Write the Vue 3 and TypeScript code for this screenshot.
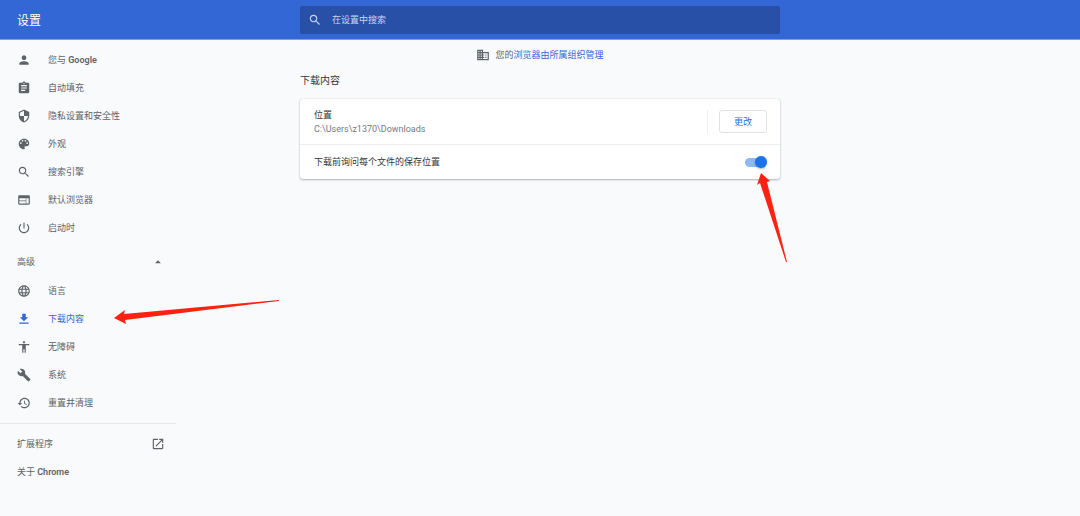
<script setup lang="ts">
import { ref } from 'vue'

interface NavItem {
  id: string
  label: string
  latin?: string
  icon: string
}

const basicItems: NavItem[] = [
  { id: 'people', label: '您与 ', latin: 'Google', icon: 'M12 12c2.21 0 4-1.79 4-4s-1.79-4-4-4-4 1.79-4 4 1.79 4 4 4zm0 2c-2.67 0-8 1.34-8 4v2h16v-2c0-2.66-5.33-4-8-4z' },
  { id: 'autofill', label: '自动填充', icon: 'M19 3h-4.18C14.4 1.84 13.3 1 12 1c-1.3 0-2.4.84-2.82 2H5c-1.1 0-2 .9-2 2v14c0 1.1.9 2 2 2h14c1.1 0 2-.9 2-2V5c0-1.1-.9-2-2-2zm-7 0c.55 0 1 .45 1 1s-.45 1-1 1-1-.45-1-1 .45-1 1-1zm2 14H7v-2h7v2zm3-4H7v-2h10v2zm0-4H7V7h10v2z' },
  { id: 'privacy', label: '隐私设置和安全性', icon: 'M12 1L3 5v6c0 5.55 3.84 10.74 9 12 5.16-1.26 9-6.45 9-12V5l-9-4zm0 10.99h7c-.53 4.12-3.28 7.79-7 8.94V12H5V6.3l7-3.11v8.8z' },
  { id: 'appearance', label: '外观', icon: 'M12 3c-4.97 0-9 4.03-9 9s4.03 9 9 9c.83 0 1.5-.67 1.5-1.5 0-.39-.15-.74-.39-1.01-.23-.26-.38-.61-.38-.99 0-.83.67-1.5 1.5-1.5H16c2.76 0 5-2.24 5-5 0-4.42-4.03-8-9-8zm-5.5 9c-.83 0-1.5-.67-1.5-1.5S5.67 9 6.5 9 8 9.67 8 10.5 7.33 12 6.5 12zm3-4C8.67 8 8 7.33 8 6.5S8.67 5 9.5 5s1.5.67 1.5 1.5S10.33 8 9.5 8zm5 0c-.83 0-1.5-.67-1.5-1.5S13.67 5 14.5 5s1.5.67 1.5 1.5S15.33 8 14.5 8zm3 4c-.83 0-1.5-.67-1.5-1.5S16.67 9 17.5 9s1.5.67 1.5 1.5-.67 1.5-1.5 1.5z' },
  { id: 'search', label: '搜索引擎', icon: 'M15.5 14h-.79l-.28-.27C15.41 12.59 16 11.11 16 9.5 16 5.91 13.09 3 9.5 3S3 5.91 3 9.5 5.91 16 9.5 16c1.61 0 3.09-.59 4.23-1.57l.27.28v.79l5 4.99L20.49 19l-4.99-5zm-6 0C7.01 14 5 11.99 5 9.5S7.01 5 9.5 5 14 7.01 14 9.5 11.99 14 9.5 14z' },
  { id: 'browser', label: '默认浏览器', icon: 'M20 4H4c-1.1 0-1.99.9-1.99 2L2 18c0 1.1.9 2 2 2h16c1.1 0 2-.9 2-2V6c0-1.1-.9-2-2-2zm-5 14H4v-4h11v4zm0-5H4V9h11v4zm5 5h-4V9h4v9z' },
  { id: 'startup', label: '启动时', icon: 'M13 3h-2v10h2V3zm4.83 2.17l-1.42 1.42C17.99 7.86 19 9.81 19 12c0 3.87-3.13 7-7 7s-7-3.13-7-7c0-2.19 1.01-4.14 2.58-5.42L6.17 5.17C4.23 6.82 3 9.26 3 12c0 4.97 4.03 9 9 9s9-4.03 9-9c0-2.74-1.23-5.18-3.17-6.83z' },
]

const advancedItems: NavItem[] = [
  { id: 'languages', label: '语言', icon: 'M11.99 2C6.47 2 2 6.48 2 12s4.47 10 9.99 10C17.52 22 22 17.52 22 12S17.52 2 11.99 2zm6.93 6h-2.95c-.32-1.25-.78-2.45-1.38-3.56 1.84.63 3.37 1.91 4.33 3.56zM12 4.04c.83 1.2 1.48 2.53 1.91 3.96h-3.82c.43-1.43 1.08-2.76 1.91-3.96zM4.26 14C4.1 13.36 4 12.69 4 12s.1-1.36.26-2h3.38c-.08.66-.14 1.32-.14 2s.06 1.34.14 2H4.26zm.82 2h2.95c.32 1.25.78 2.45 1.38 3.56-1.84-.63-3.37-1.9-4.33-3.56zm2.95-8H5.08c.96-1.66 2.49-2.93 4.33-3.56C8.81 5.55 8.35 6.75 8.03 8zM12 19.96c-.83-1.2-1.48-2.53-1.91-3.96h3.82c-.43 1.43-1.08 2.76-1.91 3.96zM14.34 14H9.66c-.09-.66-.16-1.32-.16-2s.07-1.35.16-2h4.68c.09.65.16 1.32.16 2s-.07 1.34-.16 2zm.25 5.56c.6-1.11 1.06-2.31 1.38-3.56h2.95c-.96 1.65-2.49 2.93-4.33 3.56zM16.36 14c.08-.66.14-1.32.14-2s-.06-1.34-.14-2h3.38c.16.64.26 1.31.26 2s-.1 1.36-.26 2h-3.38z' },
  { id: 'downloads', label: '下载内容', icon: 'M19 9h-4V3H9v6H5l7 7 7-7zM4 18v2h16v-2H4z' },
  { id: 'accessibility', label: '无障碍', icon: 'M12 2c1.1 0 2 .9 2 2s-.9 2-2 2-2-.9-2-2 .9-2 2-2zm9 7h-6v13h-2v-6h-2v6H9V9H3V7h18v2z' },
  { id: 'system', label: '系统', icon: 'M22.7 19l-9.1-9.1c.9-2.3.4-5-1.5-6.9-2-2-5-2.4-7.4-1.3L9 6 6 9 1.6 4.7C.4 7.1.9 10.1 2.9 12.1c1.9 1.9 4.6 2.4 6.9 1.5l9.1 9.1c.4.4 1 .4 1.4 0l2.3-2.3c.5-.4.5-1.1.1-1.4z' },
  { id: 'reset', label: '重置并清理', icon: 'M13 3c-4.97 0-9 4.03-9 9H1l3.89 3.89.07.14L9 12H6c0-3.87 3.13-7 7-7s7 3.13 7 7-3.13 7-7 7c-1.93 0-3.68-.79-4.94-2.06l-1.42 1.42C8.27 19.99 10.51 21 13 21c4.97 0 9-4.03 9-9s-4.03-9-9-9zm-1 5v5l4.28 2.54.72-1.21-3.5-2.08V8H12z' },
]

const searchIcon = basicItems[4].icon
const active = ref('downloads')
const advancedOpen = ref(true)
const askBeforeSaving = ref(true)
const query = ref('')
const location = 'C:\\Users\\z1370\\Downloads'
</script>

<template>
  <div class="page">
    <header class="toolbar">
      <h1 class="title">设置</h1>
      <label class="search">
        <svg class="icon" viewBox="0 0 24 24" aria-hidden="true"><path :d="searchIcon" /></svg>
        <input v-model="query" type="search" placeholder="在设置中搜索" aria-label="在设置中搜索" />
      </label>
    </header>

    <div class="body">
      <nav class="sidebar">
        <ul class="list">
          <li v-for="item in basicItems" :key="item.id">
            <a :href="'#' + item.id" class="item" :class="{ active: active === item.id }" @click="active = item.id">
              <svg class="icon" viewBox="0 0 24 24" aria-hidden="true"><path :d="item.icon" /></svg>
              <span>{{ item.label }}<b v-if="item.latin">{{ item.latin }}</b></span>
            </a>
          </li>
        </ul>
        <button type="button" class="item advanced" :aria-expanded="advancedOpen" @click="advancedOpen = !advancedOpen">
          <span>高级</span>
          <svg class="icon" viewBox="0 0 24 24" aria-hidden="true"><path d="M7 14l5-5 5 5z" /></svg>
        </button>
        <ul v-if="advancedOpen" class="list">
          <li v-for="item in advancedItems" :key="item.id" class="entry">
            <a :href="'#' + item.id" class="item" :class="{ active: active === item.id }" @click="active = item.id">
              <svg class="icon" viewBox="0 0 24 24" aria-hidden="true"><path :d="item.icon" /></svg>
              <span>{{ item.label }}</span>
            </a>
            <svg v-if="item.id === 'downloads'" class="arrow arrow-nav" viewBox="0 0 166 25" aria-hidden="true">
              <path d="M0 18 L11 10 L10 14 L165 0 L165 1 L11 20 L12 24 Z" />
            </svg>
          </li>
        </ul>
        <div class="footer">
          <a href="#extensions" class="item spread">
            <span>扩展程序</span>
            <svg class="icon" viewBox="0 0 24 24" aria-hidden="true"><path d="M19 19H5V5h7V3H5c-1.11 0-2 .9-2 2v14c0 1.1.89 2 2 2h14c1.1 0 2-.9 2-2v-7h-2v7zM14 3v2h3.59l-9.83 9.83 1.41 1.41L19 6.41V10h2V3h-7z" /></svg>
          </a>
          <a href="#about" class="item"><span>关于 <b>Chrome</b></span></a>
        </div>
      </nav>

      <main class="content">
        <p class="managed">
          <svg class="icon" viewBox="0 0 24 24" aria-hidden="true"><path d="M12 7V3H2v18h20V7H12zM6 19H4v-2h2v2zm0-4H4v-2h2v2zm0-4H4V9h2v2zm0-4H4V5h2v2zm4 12H8v-2h2v2zm0-4H8v-2h2v2zm0-4H8V9h2v2zm0-4H8V5h2v2zm10 12h-8v-2h2v-2h-2v-2h2v-2h-2V9h8v10zm-2-8h-2v2h2v-2zm0 4h-2v2h2v-2z" /></svg>
          <span>您的<a href="#management">浏览器由所属组织管理</a></span>
        </p>
        <h2 class="heading">下载内容</h2>
        <section class="card">
          <div class="row location">
            <div class="text">
              <div>位置</div>
              <div class="path">{{ location }}</div>
            </div>
            <div class="action"><button type="button" class="change">更改</button></div>
          </div>
          <div class="row ask">
            <label class="text" for="ask">下载前询问每个文件的保存位置</label>
            <input id="ask" v-model="askBeforeSaving" class="toggle" type="checkbox" role="switch" />
            <svg class="arrow arrow-toggle" viewBox="0 0 31 90" aria-hidden="true">
              <path d="M4 0 L13 8 L10 9 L30 89 L29 89 L3 10 L0 12 Z" />
            </svg>
          </div>
        </section>
      </main>
    </div>
  </div>
</template>

<style>
body {
  margin: 0;
  background: #f8fafc;
}
</style>

<style scoped>
.page {
  min-height: 100vh;
  background: #f8fafc;
  color: #333639;
  font-family: Roboto, "Noto Sans CJK SC", sans-serif;
  font-size: 9px;
  line-height: 14px;
}
.toolbar,
.body {
  display: grid;
  grid-template-columns: 176px minmax(0, 1fr) 176px;
}
.toolbar {
  align-items: center;
  box-sizing: border-box;
  height: 40px;
  background: #3367d6;
  border-bottom: 1px solid #7d9fe6;
  color: #fff;
}
.title {
  margin: 0;
  padding: 2px 0 0 17px;
  font-size: 12px;
  font-weight: 400;
  line-height: 16px;
}
.search {
  display: flex;
  align-items: center;
  gap: 10px;
  box-sizing: border-box;
  width: 100%;
  max-width: 480px;
  height: 28px;
  margin: 0 auto;
  padding: 0 8px;
  border-radius: 2px;
  background: #2850a7;
  color: #c9d5ee;
}
.search input {
  flex: 1;
  min-width: 0;
  padding: 0;
  border: 0;
  outline: 0;
  background: transparent;
  color: #fff;
  font: inherit;
}
.search input::placeholder {
  color: #c9d5ee;
  opacity: 1;
}
.icon {
  flex: none;
  width: 14px;
  height: 14px;
  fill: currentColor;
}
.sidebar {
  padding-top: 6px;
  color: #5f6368;
}
.list {
  margin: 0;
  padding: 0;
  list-style: none;
}
.entry {
  position: relative;
}
.item {
  display: flex;
  align-items: center;
  gap: 17px;
  box-sizing: border-box;
  width: 100%;
  height: 28px;
  padding: 0 11px 0 17px;
  border: 0;
  background: none;
  color: inherit;
  font: inherit;
  text-decoration: none;
}
.item b {
  font-weight: 600;
}
.item.active {
  color: #3367d6;
}
.advanced,
.spread {
  justify-content: space-between;
}
.advanced {
  margin: 6px 0 1px;
}
.footer {
  margin-top: 6px;
  padding-top: 6px;
  border-top: 1px solid #e6e8eb;
}
.content {
  width: 100%;
  max-width: 480px;
  margin: 0 auto;
}
.managed {
  display: flex;
  align-items: center;
  justify-content: center;
  gap: 5px;
  margin: 8px 0 0;
  color: #5f6368;
}
.managed a {
  color: #3367d6;
  text-decoration: none;
}
.heading {
  margin: 11px 0 10px;
  font-size: 10px;
  font-weight: 400;
  line-height: 16px;
}
.card {
  border-radius: 3px;
  background: #fff;
  box-shadow: 0 1px 2px rgba(60, 64, 67, 0.35), 0 0 2px rgba(60, 64, 67, 0.15);
}
.row {
  display: flex;
  align-items: center;
  padding: 0 13px 0 14px;
}
.text {
  flex: 1;
}
.location {
  min-height: 45px;
}
.path {
  color: #76797d;
}
.action {
  padding-left: 11px;
  border-left: 1px solid #eceef0;
}
.change {
  display: block;
  width: 48px;
  height: 23px;
  padding: 0;
  border: 1px solid #dfe1e5;
  border-radius: 3px;
  background: #fff;
  color: #1a73e8;
  font: inherit;
}
.ask {
  position: relative;
  min-height: 34px;
  border-top: 1px solid #eceef0;
}
.toggle {
  position: relative;
  width: 18px;
  height: 9px;
  margin: 0 4px 0 0;
  border-radius: 5px;
  appearance: none;
  background: #bdc1c6;
}
.toggle::before {
  content: "";
  position: absolute;
  top: -2px;
  left: -4px;
  width: 12px;
  height: 12px;
  border-radius: 50%;
  background: #fff;
  box-shadow: 0 1px 2px rgba(60, 64, 67, 0.4);
}
.toggle:checked {
  background: #8cb8f3;
}
.toggle:checked::before {
  left: 10px;
  background: #1a73e8;
}
.arrow {
  position: absolute;
  fill: #ff2112;
  pointer-events: none;
}
.arrow-nav {
  top: -5px;
  left: 114px;
  z-index: 1;
  width: 166px;
  height: 25px;
}
.arrow-toggle {
  top: 28px;
  right: -8px;
  width: 31px;
  height: 90px;
}
</style>
